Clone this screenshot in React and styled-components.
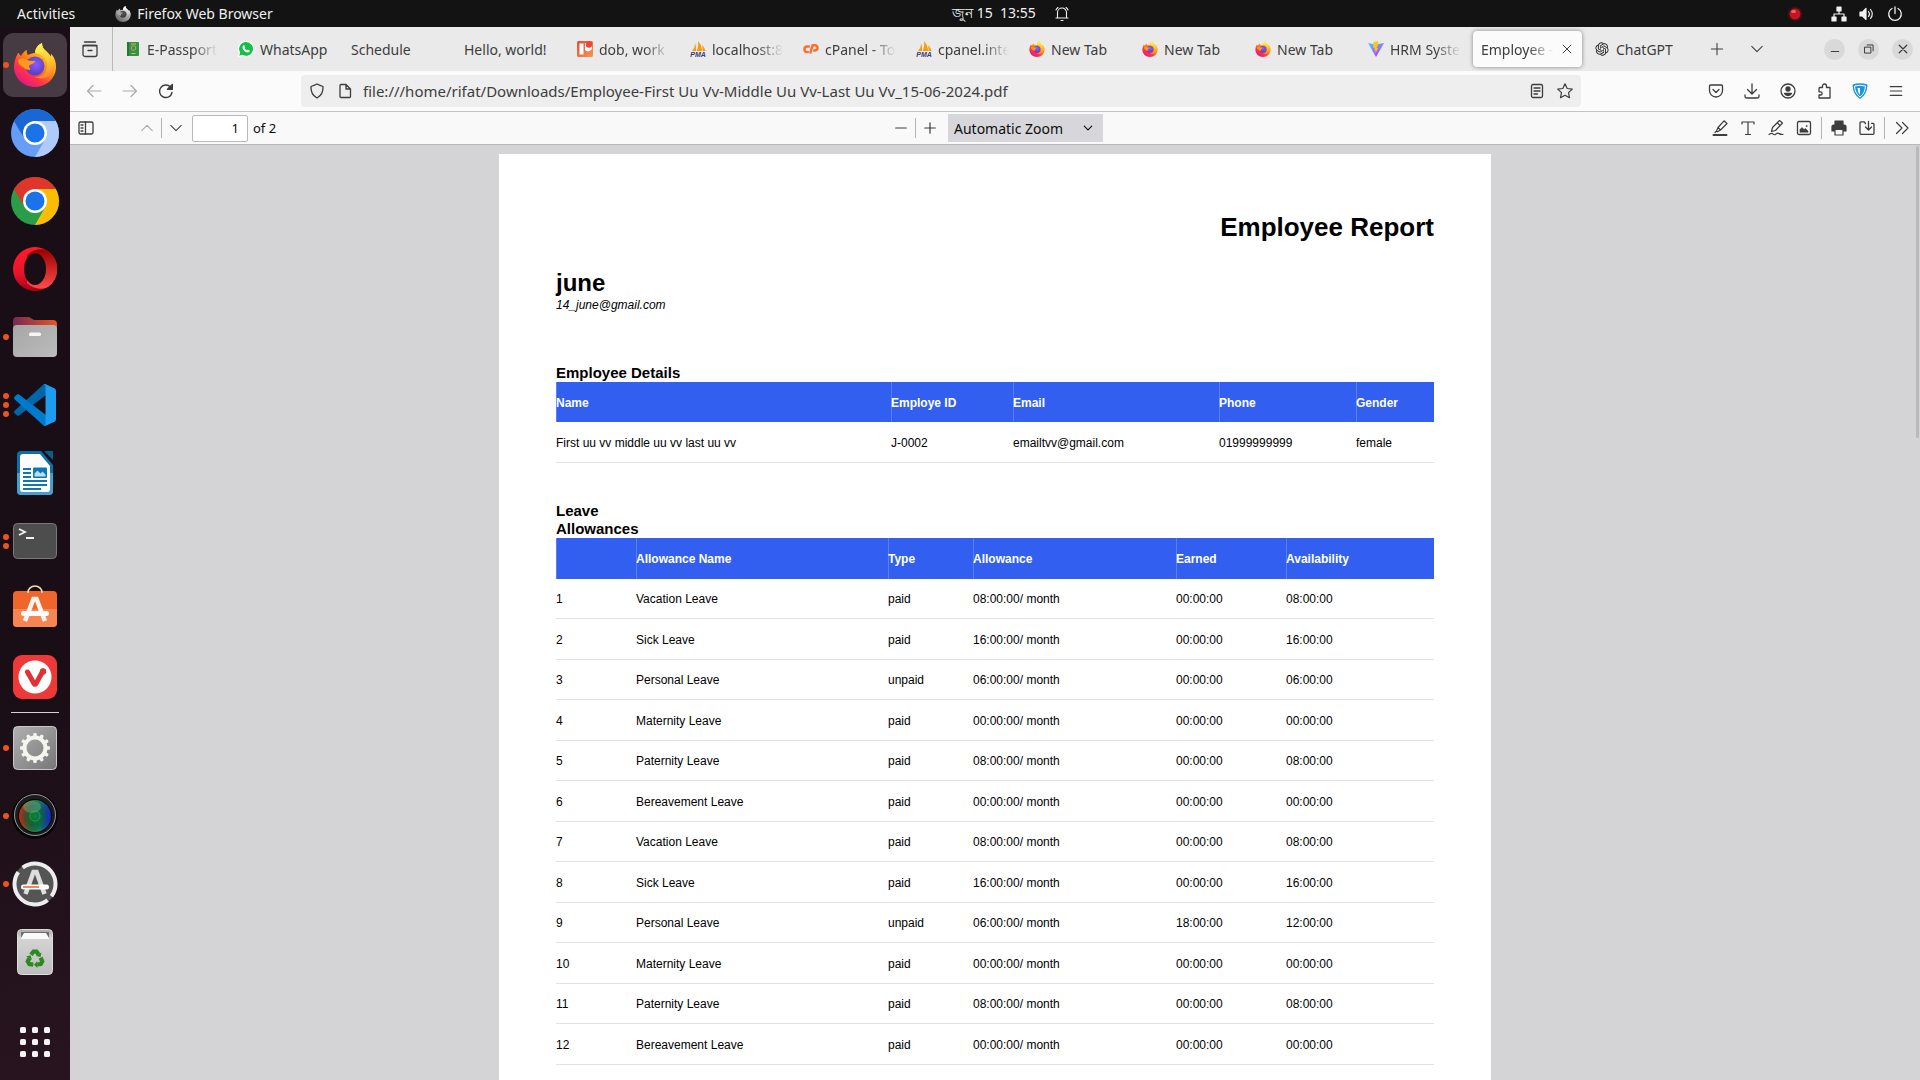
import React from "react";
import styled, { createGlobalStyle, css } from "styled-components";
import { RiOpenaiFill } from "react-icons/ri";

const Global = createGlobalStyle`
  *, *::before, *::after { box-sizing: border-box; }
  html, body, #root { height: 100%; }
  body {
    margin: 0;
    overflow: hidden;
    font-family: "Noto Sans", "Open Sans", sans-serif;
    font-size: 14px;
    color: #3d3d3d;
  }
  button, input, select { font: inherit; color: inherit; }
  svg { display: block; flex: none; }
`;

/* ---------- shell ---------- */
const Desktop = styled.div`
  display: flex;
  flex-direction: column;
  height: 100vh;
  background: #1b0f17;
`;
const Body = styled.div`
  display: flex;
  flex: 1;
  min-height: 0;
`;
const Browser = styled.main`
  display: flex;
  flex-direction: column;
  flex: 1;
  min-width: 0;
`;
const PlainButton = styled.button`
  display: flex;
  align-items: center;
  justify-content: center;
  padding: 0;
  border: 0;
  background: none;
  white-space: nowrap;
`;

/* ---------- top bar ---------- */
const TopBar = styled.header`
  display: grid;
  grid-template-columns: 1fr auto 1fr;
  align-items: center;
  height: 27px;
  padding: 0 17px;
  background: #131313;
  color: #f0f0f0;
`;
const TopGroup = styled.div`
  display: flex;
  align-items: center;
  gap: ${(p) => p.$gap}px;
  justify-content: ${(p) => (p.$end ? "flex-end" : "flex-start")};
`;
const Clock = styled(TopGroup)`
  padding-left: 102px;
  white-space: pre;
`;
const AppMenu = styled(PlainButton)`
  gap: 6px;
`;
const TrayIcon = styled.span`
  padding-right: 16px;
`;

/* ---------- dock ---------- */
const DockBar = styled.nav`
  display: flex;
  flex-direction: column;
  align-items: center;
  width: 70px;
  flex: none;
  padding: 6px 3px;
  background: linear-gradient(165deg, #190e15 60%, #28141f);
`;
const DockItem = styled(PlainButton)`
  position: relative;
  width: 64px;
  height: 64px;
  margin-bottom: 4px;
  flex: none;
  border-radius: 10px;
  background: ${(p) => (p.$active ? "#463b42" : "transparent")};
`;
const Running = styled.span`
  position: absolute;
  left: 0;
  top: 0;
  bottom: 0;
  display: flex;
  flex-direction: column;
  justify-content: center;
  gap: 3px;
  i {
    width: 6px;
    height: 6px;
    border-radius: 50%;
    background: #e95420;
  }
`;
const DockRule = styled.hr`
  width: 48px;
  height: 1px;
  flex: none;
  margin: -1px 0 3px;
  border: 0;
  background: #d5d0d3;
`;
const DockApps = styled(DockItem)`
  margin: auto 0 0;
`;

/* ---------- tabs ---------- */
const TabStrip = styled.div`
  display: flex;
  align-items: center;
  height: 44px;
  flex: none;
  background: #eaeaea;
`;
const ViewButton = styled(PlainButton)`
  width: 43px;
  height: 44px;
  padding-right: 2px;
  border-right: 1px solid #b9b9b9;
  margin-right: 2px;
`;
const Tab = styled.div`
  display: flex;
  align-items: center;
  gap: 6px;
  flex: 0 1 109px;
  min-width: 0;
  height: 36px;
  margin: 0 2px;
  padding: 0 8px;
  border-radius: 4px;
  ${(p) =>
    p.$active &&
    css`
      background: #fbfbfb;
      box-shadow: 0 0 4px rgba(0, 0, 0, 0.45);
    `}
`;
const TabLabel = styled.button`
  flex: 1;
  min-width: 0;
  padding: 0;
  border: 0;
  background: none;
  text-align: left;
  white-space: nowrap;
  ${(p) =>
    p.$fade &&
    css`
      mask-image: linear-gradient(to left, transparent, #000 26px);
    `}
`;
const StripButton = styled(PlainButton)`
  width: 40px;
  height: 36px;
`;
const WindowButtons = styled.div`
  display: flex;
  gap: 13px;
  margin-left: auto;
  padding-right: 7px;
`;
const WindowButton = styled(PlainButton)`
  width: 21px;
  height: 21px;
  border-radius: 50%;
  background: #d9d9d9;
`;

/* ---------- address bar ---------- */
const NavBar = styled.div`
  display: flex;
  align-items: center;
  height: 41px;
  flex: none;
  padding: 0 6px;
  border-bottom: 1px solid #c4c4c4;
  background: #fbfbfb;
`;
const ToolButton = styled(PlainButton)`
  width: 36px;
  height: 32px;
  color: ${(p) => (p.$dim ? "#a9a9a9" : "#3d3d3d")};
`;
const UrlBox = styled.label`
  display: flex;
  align-items: center;
  flex: 1;
  min-width: 0;
  height: 32px;
  margin: 0 117px;
  padding: 0 8px;
  border-radius: 4px;
  background: #eeeeee;
`;
const UrlInput = styled.input`
  flex: 1;
  min-width: 0;
  margin-left: 10px;
  padding: 0;
  border: 0;
  outline: 0;
  background: none;
  font-size: 15px;
`;
const UrlIcons = styled.span`
  display: flex;
  gap: 12px;
`;

/* ---------- viewer toolbar ---------- */
const PdfBar = styled.div`
  display: grid;
  grid-template-columns: 1fr auto 1fr;
  align-items: center;
  height: 33px;
  flex: none;
  border-bottom: 1px solid #b8b8b8;
  background: #f9f9fa;
  color: #0c0c0d;
  font-size: 13px;
`;
const PdfGroup = styled.div`
  display: flex;
  align-items: center;
  justify-content: ${(p) => (p.$end ? "flex-end" : "flex-start")};
  padding: ${(p) => (p.$end ? "0 4px 0 0" : "0 2px")};
`;
const PdfButton = styled(PlainButton)`
  width: 28px;
  height: 28px;
  color: ${(p) => (p.$dim ? "#a9a9a9" : "#3d3d3d")};
`;
const SidebarButton = styled(PdfButton)`
  margin-right: 33px;
`;
const Divider = styled.span`
  width: 1px;
  height: ${(p) => (p.$tall ? 22 : 20)}px;
  margin: 0 ${(p) => (p.$tall ? 3 : 0)}px;
  background: #b3b3b3;
`;
const PageField = styled.label`
  display: flex;
  align-items: center;
  gap: 5px;
  margin-left: 2px;
`;
const PageInput = styled.input`
  width: 56px;
  height: 27px;
  padding: 0 8px;
  border: 1px solid #b8b8bc;
  border-radius: 2px;
  background: #fff;
  text-align: right;
`;
const ZoomBox = styled.span`
  display: grid;
  align-items: center;
  margin-left: 4px;
  > * { grid-area: 1 / 1; }
  > svg { justify-self: end; margin-right: 10px; pointer-events: none; }
`;
const ZoomSelect = styled.select`
  appearance: none;
  width: 155px;
  height: 28px;
  padding: 0 6px;
  border: 0;
  border-radius: 0;
  background: #d7d7db;
  font-size: 14px;
`;

/* ---------- document ---------- */
const Viewer = styled.section`
  display: flex;
  flex: 1;
  min-height: 0;
  background: #d4d4d7;
  overflow: hidden;
`;
const Canvas = styled.div`
  flex: 1;
  padding-top: 9px;
  overflow: hidden;
`;
const Scrollbar = styled.div`
  width: 3px;
  height: 292px;
  margin: 1px 1px 0 -4px;
  border-radius: 2px;
  background: #b9b9bb;
`;
const Page = styled.article`
  width: 992px;
  max-width: 100%;
  min-height: 100%;
  margin: 0 auto;
  padding: 58px 57px 0;
  background: #fff;
  color: #000;
  font-family: "Liberation Sans", Arial, sans-serif;
  font-size: 12px;
  line-height: 18px;
`;
const ReportTitle = styled.h1`
  margin: 0;
  font-size: 26px;
  line-height: 30px;
  text-align: right;
`;
const Company = styled.h2`
  margin: 27px 0 0;
  font-size: 24px;
  line-height: 28px;
`;
const CompanyMail = styled.address`
  line-height: 16px;
`;
const SectionTitle = styled.h3`
  width: ${(p) => (p.$narrow ? "min-content" : "auto")};
  margin: ${(p) => p.$top}px 0 0;
  font-size: 15px;
  line-height: 18px;
`;
const Table = styled.table`
  width: 100%;
  table-layout: fixed;
  border-collapse: separate;
  border-spacing: 0;
  th, td {
    padding: 1px 0 0;
    text-align: left;
    white-space: nowrap;
  }
  th {
    height: 40px;
    background: #335ff0;
    color: #fff;
    box-shadow: inset 1px 0 #5a7ef3;
  }
  td {
    height: 41px;
    border-bottom: 1px solid #e2e2e2;
  }
  ${(p) =>
    p.$dense &&
    css`
      th { height: 41px; }
      tbody tr:nth-child(odd) td { height: 40px; }
    `}
`;

/* ---------- icons ---------- */
const Ico = ({ s = 16, w = 1.2, vb = 16, fill = "none", children, d }) => (
  <svg width={s} height={s} viewBox={`0 0 ${vb} ${vb}`} fill={fill} stroke="currentColor" strokeWidth={w} strokeLinecap="round" strokeLinejoin="round" aria-hidden="true">
    {d && <path d={d} />}
    {children}
  </svg>
);

const Firefox = ({ s, id, mono }) => (
  <svg width={s} height={s} viewBox="0 0 44 44" aria-hidden="true">
    <defs>
      <linearGradient id={`${id}b`} x1=".85" y1=".05" x2=".2" y2=".95">
        <stop offset="0" stopColor={mono ? "#eee" : "#fff44f"} />
        <stop offset=".4" stopColor={mono ? "#bbb" : "#ff980e"} />
        <stop offset=".72" stopColor={mono ? "#888" : "#ff3647"} />
        <stop offset="1" stopColor={mono ? "#666" : "#e31587"} />
      </linearGradient>
      <radialGradient id={`${id}g`} cx=".55" cy=".4" r=".7">
        <stop offset="0" stopColor={mono ? "#555" : "#9059ff"} />
        <stop offset="1" stopColor={mono ? "#333" : "#4a3bb5"} />
      </radialGradient>
      <linearGradient id={`${id}y`} x1=".5" y1="0" x2=".7" y2="1">
        <stop offset="0" stopColor={mono ? "#fff" : "#fff44f"} />
        <stop offset=".6" stopColor={mono ? "#ccc" : "#ffbd2f"} />
        <stop offset="1" stopColor={mono ? "#888" : "#ff7a2a"} />
      </linearGradient>
    </defs>
    <path fill={`url(#${id}b)`} d="M5 10c-3 5-4 10-4 14 0 11 9.500 20 21 20s21-9 21-20c0-6-2-10-5-13l0 3c-1-2-3-4-5-6-3-2-4-5-4-8-5 2-7 7-7 10-3 0-5 1-7 2-1-1-1.500-3-1-5-3 1-5 4-6 6-1-1-2-2-2-3z" />
    <path fill={`url(#${id}y)`} d="M29 0c-5 2-7 7-7 10 8 1 13 7 12 14-1 7-6 10-12 10 9 4 18-1 20-9 1-6-1-11-4-14v3c-1-2-3-4-5-6-3-2-4-5-4-8z" />
    <circle cx="22" cy="23" r="9.500" fill={`url(#${id}g)`} />
    <path fill={mono ? "#aaa" : "#ff9a1a"} d="M5 17c3-2 7-2 9 0 2 1 5 1 8 1 0 3-5 3-6 5 0 2 2 3 1 4-3 0-5-1-7-3-2-1-5-3-5-7z" />
  </svg>
);

const Chrome = ({ id, top, left, right }) => (
  <svg width="48" height="48" viewBox="0 0 48 48" aria-hidden="true">
    <clipPath id={id}><circle cx="24" cy="24" r="24" /></clipPath>
    <g clipPath={`url(#${id})`}>
      <path fill={left} d="M0 0h48v48H0z" />
      <path fill={right} d="M24 12h24v36H24L34.400 30z" />
      <path fill={top} d="M3 12V0h45v12H24L13.600 30z" />
    </g>
    <circle cx="24" cy="24" r="12" fill="#fff" />
    <circle cx="24" cy="24" r="9.500" fill="#1a73e8" />
  </svg>
);

const Opera = () => (
  <svg width="44" height="44" viewBox="0 0 44 44" aria-hidden="true">
    <defs>
      <linearGradient id="op1" x1="0" y1="0" x2="0" y2="1"><stop offset="0" stopColor="#ff1b2d" /><stop offset=".6" stopColor="#e8152a" /><stop offset="1" stopColor="#a70014" /></linearGradient>
      <linearGradient id="op2" x1="0" y1="0" x2="0" y2="1"><stop offset="0" stopColor="#9c0000" /><stop offset="1" stopColor="#ff4b4b" /></linearGradient>
    </defs>
    <circle cx="22" cy="22" r="22" fill="url(#op1)" />
    <path fill="url(#op2)" d="M14 8c6-6 15-7 21-4a22 22 0 0 1 0 36c-6 3-15 2-21-4z" />
    <ellipse cx="22" cy="22" rx="11" ry="16" fill="#190e15" />
  </svg>
);

const Files = () => (
  <svg width="44" height="40" viewBox="0 0 44 40" aria-hidden="true">
    <defs>
      <linearGradient id="fl1"><stop offset="0" stopColor="#772953" /><stop offset="1" stopColor="#e95420" /></linearGradient>
      <linearGradient id="fl2" x2="1" y2="1"><stop offset="0" stopColor="#a6a6a6" /><stop offset="1" stopColor="#bcbcbc" /></linearGradient>
    </defs>
    <path fill="url(#fl1)" d="M0 4a4 4 0 0 1 4-4h12l5 3h19a4 4 0 0 1 4 4v14H0z" />
    <rect y="8" width="44" height="32" rx="4" fill="url(#fl2)" />
    <rect x="16" y="15.500" width="12" height="3.500" rx="1.500" fill="#f5f5f5" />
  </svg>
);

const Code = () => (
  <svg width="42" height="42" viewBox="0 0 100 100" aria-hidden="true">
    <path fill="#0065a9" d="M96.460 10.800L75.860.88c-2.400-1.150-5.200-.66-7.080 1.210L1.300 63.600c-1.800 1.650-1.800 4.500 0 6.100l5.500 5c1.500 1.350 3.700 1.450 5.300.24L93.400 13.300c2.700-2.100 6.600-.1 6.600 3.300v-.2c0-2.400-1.400-4.600-3.500-5.600z" />
    <path fill="#007acc" d="M96.460 89.200L75.860 99.100c-2.400 1.150-5.200.66-7.080-1.200L1.300 36.400c-1.800-1.650-1.800-4.500 0-6.100l5.500-5c1.500-1.350 3.700-1.450 5.300-.24L93.400 86.700c2.700 2.100 6.600.1 6.600-3.300v.2c0 2.400-1.400 4.600-3.500 5.600z" />
    <path fill="#1f9cf0" d="M75.860 99.100c-2.400 1.150-5.200.66-7.080-1.200 2.300 2.300 6.250.68 6.250-2.600V4.700c0-3.250-3.950-4.900-6.250-2.600 1.870-1.870 4.680-2.360 7.080-1.200l20.600 9.900c2.170 1.040 3.540 3.200 3.540 5.630v67.200c0 2.400-1.380 4.600-3.540 5.600z" />
  </svg>
);

const Writer = () => (
  <svg width="36" height="44" viewBox="0 0 36 44" aria-hidden="true">
    <path fill="#0d6fa8" d="M4 0h20l12 14v26a4 4 0 0 1-4 4H4a4 4 0 0 1-4-4V4a4 4 0 0 1 4-4z" />
    <path fill="#45a0cf" d="M0 22h36v18a4 4 0 0 1-4 4H4a4 4 0 0 1-4-4z" />
    <path fill="#fff" d="M6 3h17l10 12v23a3 3 0 0 1-3 3H6a3 3 0 0 1-3-3V6a3 3 0 0 1 3-3z" />
    <path fill="#0b5c8e" d="M27 0h9v9z" />
    <path stroke="#0d76b5" strokeWidth="2" d="M6 18h8M6 22h8M6 26h8M6 30h24M6 34h24M6 38h18" />
    <rect x="16" y="16.500" width="14" height="10.500" rx="1" fill="#0d76b5" />
    <path fill="#b8e0f5" d="M17.500 25.500v-3l3-3 3 3 2-2 3 3v2z" />
  </svg>
);

const Terminal = () => (
  <svg width="44" height="36" viewBox="0 0 44 36" aria-hidden="true">
    <rect x=".5" y=".5" width="43" height="35" rx="4" fill="#4d4d4d" stroke="#7a7a7a" />
    <path d="M6 6l6 3-6 3M13 15h8" fill="none" stroke="#f2f2f2" strokeWidth="1.800" />
  </svg>
);

const Software = () => (
  <svg width="46" height="48" viewBox="0 0 46 48" aria-hidden="true">
    <rect x="1" y="6" width="44" height="36" rx="4" fill="#ee6629" />
    <path fill="#f58652" d="M1 24h44v14a4 4 0 0 1-4 4H5a4 4 0 0 1-4-4z" />
    <path d="M16 8V7.500a7 6.500 0 0 1 14 0V8" fill="none" stroke="#f7dca8" strokeWidth="1.600" />
    <path d="M13 36l8.500-22h3L33 36" fill="none" stroke="#fff3ec" strokeWidth="4.500" />
    <rect x="9" y="26" width="28" height="5" rx="2.500" fill="#fff" />
  </svg>
);

const Vivaldi = () => (
  <svg width="44" height="44" viewBox="0 0 44 44" aria-hidden="true">
    <rect width="44" height="44" rx="9" fill="#ef3939" />
    <circle cx="22" cy="22" r="16.500" fill="#fff" />
    <path d="M14.500 17l6.500 11.500q1 1.500 2 0L30 16" fill="none" stroke="#e03038" strokeWidth="5" strokeLinecap="round" strokeLinejoin="round" />
    <circle cx="30" cy="16.500" r="3.200" fill="#e03038" />
  </svg>
);

const Settings = () => (
  <svg width="44" height="44" viewBox="0 0 44 44" aria-hidden="true">
    <defs><linearGradient id="st" x2="1" y2="1"><stop offset="0" stopColor="#b0b0b0" /><stop offset="1" stopColor="#777" /></linearGradient></defs>
    <rect x=".5" y=".5" width="43" height="43" rx="4" fill="url(#st)" stroke="#c8c8c8" />
    <circle cx="22" cy="22" r="10.500" fill="none" stroke="#f5f5f0" strokeWidth="4" />
    {[...Array(12)].map((_, i) => (
      <rect key={i} x="20.300" y="7" width="3.400" height="4" rx="1" fill="#f5f5f0" transform={`rotate(${i * 30} 22 22)`} />
    ))}
  </svg>
);

const Lens = () => (
  <svg width="46" height="46" viewBox="0 0 46 46" aria-hidden="true">
    <defs>
      <linearGradient id="ln"><stop offset="0" stopColor="#d02a18" /><stop offset=".35" stopColor="#2a7a3a" /><stop offset=".65" stopColor="#118a6a" /><stop offset="1" stopColor="#1a20e0" /></linearGradient>
      <radialGradient id="ln2"><stop offset="0" stopColor="#0a8a3a" stopOpacity=".9" /><stop offset=".6" stopColor="#033a22" stopOpacity=".4" /><stop offset="1" stopColor="#000" stopOpacity="0" /></radialGradient>
    </defs>
    <circle cx="23" cy="23" r="23" fill="#070707" />
    <circle cx="23" cy="22" r="20.500" fill="#1c1c1c" stroke="#999" strokeWidth="1" />
    <circle cx="23" cy="23" r="17" fill="#050505" />
    <circle cx="23" cy="23" r="16" fill="url(#ln)" />
    <circle cx="23" cy="23" r="16" fill="url(#ln2)" />
    <ellipse cx="20" cy="14" rx="9" ry="6" fill="#fff" opacity=".2" />
    <circle cx="23" cy="23" r="5" fill="none" stroke="#2fbf5a" strokeWidth=".8" opacity=".7" />
  </svg>
);

const Updater = () => (
  <svg width="46" height="46" viewBox="0 0 46 46" aria-hidden="true">
    <circle cx="23" cy="23" r="22" fill="#555" />
    <circle cx="23" cy="23" r="20.500" fill="none" stroke="#ededed" strokeWidth="4" strokeDasharray="58 6.400" transform="rotate(52 23 23)" />
    <path d="M13.500 33l8-22h3l8 22" fill="none" stroke="#dedede" strokeWidth="4.500" />
    <rect x="9" y="23.500" width="28" height="5" rx="2.500" fill="#fff" />
    <path d="M11 26h16" stroke="#e95420" strokeWidth="1.400" />
  </svg>
);

const Trash = () => (
  <svg width="36" height="46" viewBox="0 0 36 46" aria-hidden="true">
    <defs><linearGradient id="tr" x2="0" y2="1"><stop offset="0" stopColor="#a8a8a8" /><stop offset=".2" stopColor="#d4d4d4" /><stop offset="1" stopColor="#bdbdbd" /></linearGradient></defs>
    <rect x=".5" y=".5" width="35" height="45" rx="4" fill="url(#tr)" stroke="#ddd" />
    <path fill="#6d6d6d" d="M4 3h28v7H4z" />
    <path fill="#fafafa" d="M4 9l3-5h22l3 5v1H4z" />
    <g fill="none" stroke="#2a8a1c" strokeWidth="4.200">
      {[0, 120, 240].map((a) => (
        <g key={a} transform={`rotate(${a} 18 30)`}>
          <path d="M14 25.800L16.500 22.500h3L21.500 25.500" />
          <path d="M24.500 23.500l-1 4.500-4.500-1z" fill="#2a8a1c" stroke="none" />
        </g>
      ))}
    </g>
  </svg>
);

const AppGrid = () => (
  <svg width="30" height="30" viewBox="0 0 30 30" fill="#f4f4f4" aria-hidden="true">
    {[0, 12, 24].map((y) => [0, 12, 24].map((x) => <rect key={`${x}-${y}`} x={x} y={y} width="6" height="6" rx="1.600" />))}
  </svg>
);

const Passport = () => (
  <svg width="16" height="16" viewBox="0 0 16 16" aria-hidden="true">
    <rect x="2" y="1" width="12" height="14" rx="1" fill="#3a9047" />
    <rect x="2" y="1" width="2" height="14" fill="#2b7236" />
    <circle cx="8.500" cy="7" r="2.300" fill="none" stroke="#9fb84f" />
    <path d="M6 3h5M6.500 12.500h4" stroke="#c2c454" />
  </svg>
);
const WhatsApp = () => (
  <svg width="16" height="16" viewBox="0 0 16 16" aria-hidden="true">
    <path fill="#fff" d="M8 0a8 8 0 1 1-3.800 15L0 16l1-4A8 8 0 0 1 8 0z" />
    <path fill="#10c145" d="M8.100 1a6.900 6.900 0 1 1-3.600 12.800L1.300 14.700l.9-3.200A6.900 6.900 0 0 1 8.100 1z" />
    <path fill="#fff" d="M5.500 4.300h.8l.9 1.900-.6.9q.9 1.600 2.500 2.300l.8-.9 1.900.9q0 1.900-1.900 2.100Q5 10.700 4.500 6.500q0-1.500 1-2.200z" />
  </svg>
);
const Dob = () => (
  <svg width="16" height="16" viewBox="0 0 16 16" aria-hidden="true">
    <defs><linearGradient id="db" x2="1" y2="1"><stop offset="0" stopColor="#e8483a" /><stop offset="1" stopColor="#f39a4a" /></linearGradient></defs>
    <rect width="16" height="16" rx="1.500" fill="url(#db)" />
    <path fill="#fff" d="M2.500 2.500h4v11h-4zM8 2h7v4a4 4 0 0 1-7 3z" />
    <circle cx="12" cy="3.500" r="3.200" fill="#e8483a" />
  </svg>
);
const Pma = () => (
  <svg width="16" height="16" viewBox="0 0 16 16" aria-hidden="true">
    <path fill="#f89c0e" d="M2 10C4 8 5 5 5 2c1 3 1 5 1 8zM6.500 10C8 7 8.500 4 8 0c3 3 4 7 4 10zM12.500 10c0-3 0-4-.5-6 2 2 3 4 3.500 6z" />
    <text x="8" y="16" textAnchor="middle" fontFamily="Liberation Sans" fontSize="7" fontWeight="700" fontStyle="italic" fill="#3a3a78">PMA</text>
  </svg>
);
const CPanel = () => (
  <svg width="16" height="16" viewBox="0 0 16 16" fill="none" stroke="#ff6c2c" strokeWidth="2.400" strokeLinejoin="round" aria-hidden="true">
    <path d="M6.800 5.500H4.200a2.800 2.800 0 0 0 0 5.600h1.600" />
    <path d="M7.200 12.500L9.600 4.200h2.200a2.600 2.600 0 0 1 0 5.300h-1.600" />
  </svg>
);
const Vite = () => (
  <svg width="16" height="16" viewBox="0 0 16 16" aria-hidden="true">
    <defs><linearGradient id="vt" x2=".6" y2="1"><stop offset="0" stopColor="#41d1ff" /><stop offset="1" stopColor="#bd34fe" /></linearGradient></defs>
    <path fill="url(#vt)" d="M0 2l8 14 8-14-8 1.500z" />
    <path fill="#ffc61c" d="M10.500 0L5.500 1l-.3 6 1.700-.4-.5 3 1.300-.4-.5 3.500 3-6-1.700.3L10 4z" />
  </svg>
);

const Chevron = ({ s = 14, up }) => <Ico s={s} d={up ? "M2 11l6-6 6 6" : "M2 5l6 6 6-6"} />;

/* ---------- data ---------- */
const ff = (id) => <Firefox s={16} id={id} />;
const tabs = [
  { t: "E-Passport", icon: <Passport />, fade: true },
  { t: "WhatsApp", icon: <WhatsApp /> },
  { t: "Schedule" },
  { t: "Hello, world!" },
  { t: "dob, work", icon: <Dob />, fade: true },
  { t: "localhost:8", icon: <Pma />, fade: true },
  { t: "cPanel - To", icon: <CPanel />, fade: true },
  { t: "cpanel.inte", icon: <Pma />, fade: true },
  { t: "New Tab", icon: ff("n1") },
  { t: "New Tab", icon: ff("n2") },
  { t: "New Tab", icon: ff("n3") },
  { t: "HRM Syste", icon: <Vite />, fade: true },
  { t: "Employee -", fade: true, active: true },
  { t: "ChatGPT", icon: <RiOpenaiFill size={16} color="#222" /> },
];

const dock = [
  { name: "Firefox", icon: <Firefox s={44} id="dk" />, run: 1, active: true },
  { name: "Chromium", icon: <Chrome id="cm" top="#1967d2" left="#669df6" right="#aecbfa" /> },
  { name: "Chrome", icon: <Chrome id="ch" top="#e0352b" left="#2b9c48" right="#fbbc04" /> },
  { name: "Opera", icon: <Opera /> },
  { name: "Files", icon: <Files />, run: 1 },
  { name: "Visual Studio Code", icon: <Code />, run: 3 },
  { name: "Writer", icon: <Writer /> },
  { name: "Terminal", icon: <Terminal />, run: 2 },
  { name: "Software", icon: <Software /> },
  { name: "Vivaldi", icon: <Vivaldi />, rule: true },
  { name: "Settings", icon: <Settings />, run: 1 },
  { name: "Lens", icon: <Lens />, run: 1 },
  { name: "Updater", icon: <Updater />, run: 1 },
  { name: "Trash", icon: <Trash /> },
];

const kinds = [
  ["Vacation Leave", "paid", "08:00:00"],
  ["Sick Leave", "paid", "16:00:00"],
  ["Personal Leave", "unpaid", "06:00:00"],
  ["Maternity Leave", "paid", "00:00:00"],
  ["Paternity Leave", "paid", "08:00:00"],
  ["Bereavement Leave", "paid", "00:00:00"],
];
const leaves = [...kinds, ...kinds].map(([name, type, hours], i) => {
  const used = i === 8;
  return [i + 1, name, type, `${hours}/ month`, used ? "18:00:00" : "00:00:00", used ? "12:00:00" : hours];
});

const DataTable = ({ widths, heads, rows, dense }) => (
  <Table $dense={dense}>
    <colgroup>
      {widths.map((w, i) => <col key={i} width={w} />)}
      <col />
    </colgroup>
    <thead>
      <tr>{heads.map((h, i) => <th key={i} scope="col">{h}</th>)}</tr>
    </thead>
    <tbody>
      {rows.map((r, i) => <tr key={i}>{r.map((c, j) => <td key={j}>{c}</td>)}</tr>)}
    </tbody>
  </Table>
);

export default function App() {
  return (
    <Desktop>
      <Global />
      <TopBar>
        <TopGroup $gap={40}>
          <PlainButton>Activities</PlainButton>
          <AppMenu><Firefox s={16} id="tp" mono />Firefox Web Browser</AppMenu>
        </TopGroup>
        <Clock $gap={18}>
          <span>জুন 15  13:55</span>
          <Ico s={16} w={1.100} d="M2 12h12M3.500 12V6.500a4.500 4.500 0 0 1 9 0V12M7 14.500h2M4 1.500Q2.500 2.500 2 4M12 1.500q1.500 1 2 2.500" />
        </Clock>
        <TopGroup $gap={12} $end>
          <TrayIcon>
            <svg width="16" height="16" viewBox="0 0 16 16" aria-hidden="true"><circle cx="8" cy="8" r="7.500" fill="#3a1015" /><circle cx="8" cy="8" r="5.500" fill="#c01525" /><ellipse cx="6.500" cy="5.500" rx="2.500" ry="1.500" fill="#e66" /></svg>
          </TrayIcon>
          <Ico s={16} w={1.200} fill="currentColor"><path d="M6 1h4v4H6zM1 11h4v4H1zM11 11h4v4h-4z" /><path fill="none" d="M8 5v3M3 11V8h10v3" /></Ico>
          <Ico s={16}><path fill="currentColor" d="M1 6h2.500L7 2.500v11L3.500 10H1z" /><path d="M9.500 5.500q2 2.500 0 5M11.500 3.500q3.500 4.500 0 9" /></Ico>
          <Ico s={16} w={1.300} d="M5 2.500a6.300 6.300 0 1 0 6 0M8 1v6.500" />
        </TopGroup>
      </TopBar>

      <Body>
        <DockBar aria-label="Dock">
          {dock.map((d) => (
            <React.Fragment key={d.name}>
              <DockItem aria-label={d.name} $active={d.active}>
                {d.run && <Running>{[...Array(d.run)].map((_, i) => <i key={i} />)}</Running>}
                {d.icon}
              </DockItem>
              {d.rule && <DockRule />}
            </React.Fragment>
          ))}
          <DockApps aria-label="Show applications"><AppGrid /></DockApps>
        </DockBar>

        <Browser>
          <TabStrip>
            <ViewButton aria-label="Recent browsing">
              <Ico s={18} w={1.300} vb={18}><path d="M3.500 2h11M2 5.500h14" /><rect x="2" y="5.500" width="14" height="11" rx="2" /><path d="M7 10.500h4" /></Ico>
            </ViewButton>
            {tabs.map((t, i) => (
              <Tab key={i} $active={t.active}>
                {t.icon}
                <TabLabel $fade={t.fade}>{t.t}</TabLabel>
                {t.active && <PlainButton aria-label="Close tab"><Ico s={14} w={1.100} d="M3.500 3.500l9 9M12.500 3.500l-9 9" /></PlainButton>}
              </Tab>
            ))}
            <StripButton aria-label="New tab"><Ico s={14} d="M8 1.500v13M1.500 8h13" /></StripButton>
            <StripButton aria-label="List tabs"><Chevron /></StripButton>
            <WindowButtons>
              <WindowButton aria-label="Minimize"><Ico s={10} w={1.600} d="M2 12h12" /></WindowButton>
              <WindowButton aria-label="Restore"><Ico s={10} w={1.600} d="M1.500 5h9.500v9.500H1.500zM5 1.500h9.500V11" /></WindowButton>
              <WindowButton aria-label="Close"><Ico s={10} w={2} d="M2 2l12 12M14 2L2 14" /></WindowButton>
            </WindowButtons>
          </TabStrip>

          <NavBar>
            <ToolButton $dim aria-label="Back"><Ico d="M15 8H1.500M7 2.500L1.500 8 7 13.500" /></ToolButton>
            <ToolButton $dim aria-label="Forward"><Ico d="M1 8h13.500M9 2.500L14.500 8 9 13.500" /></ToolButton>
            <ToolButton aria-label="Reload"><Ico w={1.400}><path d="M14 9.500A6.300 6.300 0 1 1 12.500 4" /><path fill="currentColor" d="M14.300 1.500v4.800H9.500z" /></Ico></ToolButton>
            <UrlBox>
              <UrlIcons>
                <Ico w={1.300} d="M8 1q3 1.500 6 2.500 .5 8-6 11.500Q1.500 11.500 2 3.500 5 2.500 8 1z" />
                <Ico w={1.300} d="M4 1.500h5L13.500 6v7.500q0 1-1 1h-8.500q-1 0-1-1v-11q0-1 1-1zM9 1.500V6h4.500" />
              </UrlIcons>
              <UrlInput aria-label="Address" defaultValue="file:///home/rifat/Downloads/Employee-First Uu Vv-Middle Uu Vv-Last Uu Vv_15-06-2024.pdf" />
              <UrlIcons>
                <Ico w={1.300}><rect x="2.500" y="1.500" width="11" height="13" rx="1.500" /><path d="M5 5h6M5 8h6M5 11h3.500" /></Ico>
                <Ico w={1.200} d="M8 .8l2.200 4.700 5.100.6-3.800 3.500 1 5.100L8 12.200l-4.500 2.500 1-5.100L.7 6.100l5.100-.6z" />
              </UrlIcons>
            </UrlBox>
            <ToolButton aria-label="Save to Pocket"><Ico w={1.300} d="M2.500 2h11q1 0 1 1v4.500a6.500 6.500 0 0 1-13 0V3q0-1 1-1zM5 6.500l3 3 3-3" /></ToolButton>
            <ToolButton aria-label="Downloads"><Ico w={1.300} d="M8 .8v10M3.500 6.500L8 11l4.500-4.500M1 12v1.500q0 1.500 1.500 1.500h11q1.500 0 1.500-1.500V12" /></ToolButton>
            <ToolButton aria-label="Account"><Ico w={1.300}><circle cx="8" cy="8" r="7" /><circle cx="8" cy="6" r="2" fill="currentColor" /><path fill="currentColor" d="M4.500 10.500h7q-1 2-3.500 2t-3.500-2z" /></Ico></ToolButton>
            <ToolButton aria-label="Extensions"><Ico w={1.300} d="M6.500 4.500V3a2 2 0 0 1 4 0v1.500H14V15H3v-3h1.500a1.600 1.600 0 0 0 0-3.200H3V5.500q0-1 1-1z" /></ToolButton>
            <ToolButton aria-label="VPN">
              <svg width="16" height="16" viewBox="0 0 16 16" aria-hidden="true"><path fill="#1a96dc" d="M.5 1.500q7.500-2.500 15 0 0 10-7.500 14.500Q.5 11.500.5 1.500z" /><path fill="none" stroke="#fff" strokeWidth="1" d="M2.500 3q5.500-1.500 11 0-.3 7-5.500 11Q2.800 10 2.500 3z" /><path fill="#fff" d="M5.500 5H8v7Q5.500 9.500 5.500 5z" /></svg>
            </ToolButton>
            <ToolButton aria-label="Menu"><Ico s={14} w={1.400} d="M1.500 3h13M1.500 8h13M1.500 13h13" /></ToolButton>
          </NavBar>

          <PdfBar>
            <PdfGroup>
              <SidebarButton aria-label="Toggle sidebar"><Ico w={1.300}><rect x="1" y="2" width="14" height="12" rx="1.500" /><path d="M7.500 2v12M3 5h2M3 8h2M3 11h2" /></Ico></SidebarButton>
              <PdfButton $dim aria-label="Previous page"><Chevron up /></PdfButton>
              <Divider />
              <PdfButton aria-label="Next page"><Chevron /></PdfButton>
              <PageField><PageInput aria-label="Page" defaultValue="1" /><span>of 2</span></PageField>
            </PdfGroup>
            <PdfGroup>
              <PdfButton aria-label="Zoom out"><Ico s={14} d="M2 8h12" w={1.400} /></PdfButton>
              <Divider />
              <PdfButton aria-label="Zoom in"><Ico s={14} d="M2 8h12M8 2v12" w={1.400} /></PdfButton>
              <ZoomBox>
                <ZoomSelect aria-label="Zoom"><option>Automatic Zoom</option></ZoomSelect>
                <Ico s={10} w={1.800} d="M2 5l6 6 6-6" />
              </ZoomBox>
            </PdfGroup>
            <PdfGroup $end>
              <PdfButton aria-label="Highlight"><Ico w={1.200}><path d="M6 7.500L12 .8l3 2.700-6.500 6.500zM6 7.500L4.500 11l1 .7 3-1.700M4.500 11L3 12.500" /><path strokeWidth="2" d="M1.500 15h13" /></Ico></PdfButton>
              <PdfButton aria-label="Text"><Ico w={1.200} d="M2 4V2h12v2M8 2v12M5.500 14.500h5" /></PdfButton>
              <PdfButton aria-label="Draw"><Ico w={1.200} d="M3.500 11.500L4.500 7.500l7-7 3 2.500-7 7.500zM9.500 3l2.500 2.500M1 14.500q3-2 4-.5t3 0 3-.5 4 1" /></PdfButton>
              <PdfButton aria-label="Image"><Ico w={1.300}><rect x="1.500" y="1.500" width="13" height="13" rx="1.500" /><path fill="currentColor" strokeWidth=".6" d="M4 12V9.500l2-2 2 2 1.500-1L12 11v1z" /><circle cx="10.500" cy="6" r=".6" fill="currentColor" strokeWidth=".6" /></Ico></PdfButton>
              <Divider $tall />
              <PdfButton aria-label="Print"><Ico w={1.200}><path fill="currentColor" d="M2.500 5h11q1.500 0 1.500 1.500V11h-3V9H4v2H1V6.500Q1 5 2.500 5zM4 1h8v4H4z" /><path d="M4 9.500h8V15H4z" fill="#f9f9fa" /></Ico></PdfButton>
              <PdfButton aria-label="Save"><Ico w={1.300} d="M6.500 3.500L5 1.800H2q-1 0-1 1v10.500q0 1 1 1h12q1 0 1-1v-9q0-1-1-1h-1.500M9.500 1.500v8M6.500 7l3 3 3-3" /></PdfButton>
              <Divider $tall />
              <PdfButton aria-label="Tools"><Ico w={1.200} d="M2.500 2.500L8 8l-5.500 5.500M8.500 2.500L14 8l-5.500 5.500" /></PdfButton>
            </PdfGroup>
          </PdfBar>

          <Viewer>
            <Canvas>
              <Page>
                <ReportTitle>Employee Report</ReportTitle>
                <Company>june</Company>
                <CompanyMail>14_june@gmail.com</CompanyMail>
                <SectionTitle $top={51}>Employee Details</SectionTitle>
                <DataTable
                  widths={[335, 122, 206, 137]}
                  heads={["Name", "Employe ID", "Email", "Phone", "Gender"]}
                  rows={[["First uu vv middle uu vv last uu vv", "J-0002", "emailtvv@gmail.com", "01999999999", "female"]]}
                />
                <SectionTitle $top={39} $narrow>Leave Allowances</SectionTitle>
                <DataTable
                  dense
                  widths={[80, 252, 85, 203, 110]}
                  heads={["", "Allowance Name", "Type", "Allowance", "Earned", "Availability"]}
                  rows={leaves}
                />
              </Page>
            </Canvas>
            <Scrollbar />
          </Viewer>
        </Browser>
      </Body>
    </Desktop>
  );
}
